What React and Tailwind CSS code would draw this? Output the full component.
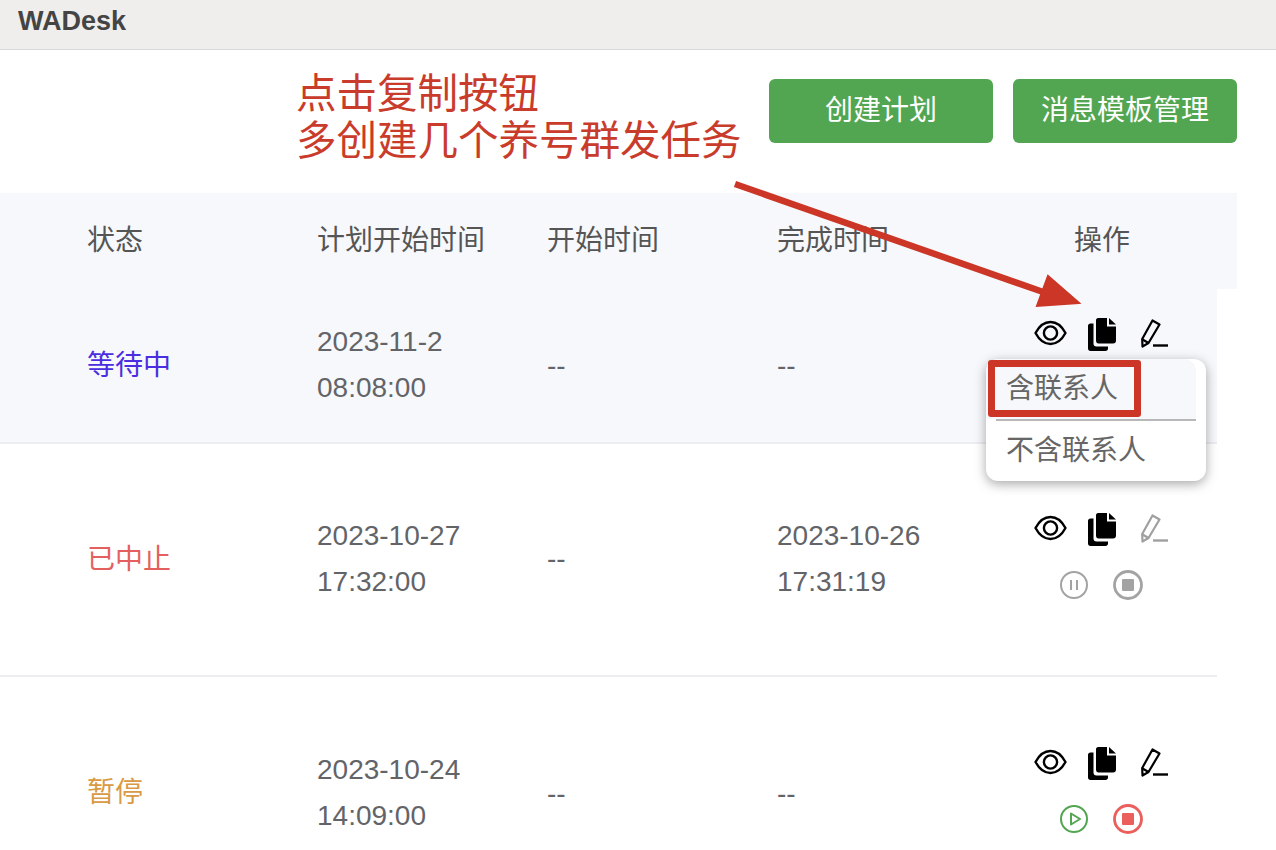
const font = { fontFamily: '"Liberation Sans", "Noto Sans CJK SC", sans-serif' };

function EyeIcon() {
  return (
    <svg width="33" height="30" viewBox="0 0 33 30" fill="none" stroke="#000" strokeWidth="2.4">
      <path d="M1.5 15C5 8.5 10 4 16.5 4S28 8.5 31.5 15C28 21.5 23 26 16.5 26S5 21.5 1.5 15Z" strokeLinejoin="round" />
      <circle cx="16.5" cy="15" r="6.6" />
    </svg>
  );
}

function CopyIcon() {
  return (
    <svg width="28" height="33" viewBox="0 0 28 33" fill="#000">
      <path d="M10 0H19V8.5H28V22.5C28 24.5 27 25.5 25 25.5H10.5C9 25.5 8 24.5 8 22.5V2C8 1 9 0 10 0Z" />
      <path d="M21 0L28 6.5H21Z" />
      <path d="M5.5 5.5V25.5C5.5 27.5 6.5 28.5 8.5 28.5H20V30.5C20 32 19 33 17.5 33H2.5C1 33 0 32 0 30.5V8C0 6.5 1 5.5 2.5 5.5Z" />
    </svg>
  );
}

function PenIcon({ color = "#000" }) {
  return (
    <svg className="mt-px" width="27" height="29" viewBox="0 0 27 29" fill="none" stroke={color} strokeWidth="2.2">
      <path d="M11.5 1.5L18.5 5.5L7.5 24L1.5 27.5L1.2 20Z" strokeLinejoin="round" />
      <path d="M1.5 20.5L7.5 24" />
      <path d="M12 26.5H27" strokeWidth="2.4" />
    </svg>
  );
}

function RoundIcon({ color, width = 2, r = 13, children }) {
  return (
    <svg width="30" height="30" viewBox="0 0 30 30" fill="none" stroke={color} strokeWidth={width}>
      <circle cx="15" cy="15" r={r} />
      {children}
    </svg>
  );
}

function Actions({ penColor, extra }) {
  return (
    <div className="w-[200px] flex flex-col items-center">
      <div className="flex items-start">
        <EyeIcon />
        <div className="ml-[21px] mr-[25px]">
          <CopyIcon />
        </div>
        <PenIcon color={penColor} />
      </div>
      {extra && <div className="flex items-center gap-[24px] mt-[24px]">{extra}</div>}
    </div>
  );
}

function Cell({ width = "w-[230px]", top, children }) {
  return (
    <div className={`${width} ${top} text-[28px] leading-[42px] text-[#636468]`}>{children}</div>
  );
}

function DateCell({ width = "w-[230px]", top, lines }) {
  return (
    <div className={`${width} ${top} text-[28px] leading-[46px] text-[#636468]`}>
      {lines.map((t) => <div key={t}>{t}</div>)}
    </div>
  );
}

export default function App() {
  return (
    <div className="relative h-[850px] w-[1276px] overflow-hidden bg-white" style={font}>
      <div className="h-[50px] bg-[#efeeed] border-b border-[#d9d8da] pl-[18px] text-[27px] font-bold leading-[42px] text-[#444]">
        WADesk
      </div>

      <div className="flex justify-end gap-5 pt-[29px] pr-[39px] h-[143px]">
        <button className="w-[224px] h-[64px] rounded-md bg-[#53a651] text-[28px] text-white">创建计划</button>
        <button className="w-[224px] h-[64px] rounded-md bg-[#53a651] text-[28px] text-white">消息模板管理</button>
      </div>

      <div className="flex items-center pl-[87px] w-[1237px] h-[96px] bg-[#f7f8fb] text-[28px] text-[#555]">
        <div className="w-[230px]">状态</div>
        <div className="w-[230px]">计划开始时间</div>
        <div className="w-[230px]">开始时间</div>
        <div className="w-[223px]">完成时间</div>
        <div className="w-[204px] text-center">操作</div>
      </div>

      <div className="flex items-start h-[155px] w-[1217px] pl-[87px] bg-[#f7f8fb] border-b-2 border-[#ecedf1]">
        <div className="w-[230px] pt-[56px] text-[28px] leading-[42px] text-[#4a2ee0]">等待中</div>
        <DateCell top="pt-[30px]" lines={["2023-11-2", "08:08:00"]} />
        <Cell top="pt-[56px]">--</Cell>
        <Cell width="w-[224px]" top="pt-[56px]">--</Cell>
        <div className="pt-[29px]">
          <Actions />
        </div>
      </div>

      <div className="flex items-start h-[233px] w-[1217px] pl-[87px] border-b-2 border-[#ecedf1]">
        <div className="w-[230px] pt-[95px] text-[28px] leading-[42px] text-[#e4605e]">已中止</div>
        <DateCell top="pt-[69px]" lines={["2023-10-27", "17:32:00"]} />
        <Cell top="pt-[94px]">--</Cell>
        <DateCell width="w-[224px]" top="pt-[69px]" lines={["2023-10-26", "17:31:19"]} />
        <div className="pt-[69px]">
          <Actions
            penColor="#a0a0a0"
            extra={
              <>
                <RoundIcon color="#a3a3a3">
                  <path d="M12 10V20M18 10V20" />
                </RoundIcon>
                <RoundIcon color="#a3a3a3" width={2.8} r={13.5}>
                  <rect x="9" y="9" width="12" height="12" rx="1" fill="#a3a3a3" stroke="none" />
                </RoundIcon>
              </>
            }
          />
        </div>
      </div>

      <div className="flex items-start w-[1217px] pl-[87px]">
        <div className="w-[230px] pt-[95px] text-[28px] leading-[42px] text-[#d99a45]">暂停</div>
        <DateCell top="pt-[70px]" lines={["2023-10-24", "14:09:00"]} />
        <Cell top="pt-[96px]">--</Cell>
        <Cell width="w-[224px]" top="pt-[96px]">--</Cell>
        <div className="pt-[70px]">
          <Actions
            extra={
              <>
                <RoundIcon color="#53a651">
                  <path d="M12 9.5L21 15L12 20.5Z" strokeLinejoin="round" />
                </RoundIcon>
                <RoundIcon color="#ea5f5c" width={2.8} r={13.5}>
                  <rect x="9" y="9" width="12" height="12" rx="1" fill="#ea5f5c" stroke="none" />
                </RoundIcon>
              </>
            }
          />
        </div>
      </div>

      {/* dropdown */}
      <div className="absolute left-[986px] top-[359px] w-[220px] h-[122px] rounded-xl bg-white shadow-[0_3px_12px_rgba(0,0,0,0.35)] text-[28px] text-[#666]">
        <div className="mr-[10px] h-[60px] rounded-t-xl bg-[#f7f8fb] pl-[20px] leading-[60px]">含联系人</div>
        <div className="mx-[10px] h-[2px] bg-[#b8b8b8]" />
        <div className="pl-[20px] leading-[60px]">不含联系人</div>
      </div>
      <div className="absolute left-[988px] top-[360px] w-[153px] h-[57px] rounded-[3px] border-[7px] border-[#cb3626]" />

      {/* annotation */}
      <div className="absolute left-[296px] top-[71px] text-[40.5px] leading-[47px] text-[#c93c2b]">
        <div>点击复制按钮</div>
        <div>多创建几个养号群发任务</div>
      </div>
      <svg className="absolute left-[730px] top-[175px]" width="360" height="140" viewBox="0 0 360 140">
        <path d="M5 9L316 118" stroke="#cb3626" strokeWidth="6.5" />
        <path d="M349 128L307 131L318 101Z" fill="#cb3626" stroke="#cb3626" strokeWidth="2" />
      </svg>
    </div>
  );
}
